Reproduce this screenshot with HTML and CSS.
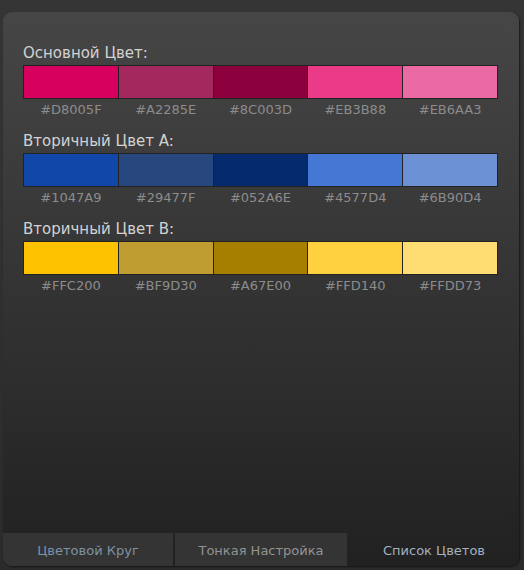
FILE: index.html
```html
<!DOCTYPE html>
<html lang="ru">
<head>
<meta charset="utf-8">
<title>Список Цветов</title>
<link rel="stylesheet" href="styles.css">
</head>
<body>
<div class="panel">
  <div class="content">
    <section class="group">
      <div class="group-title">Основной Цвет:</div>
      <div class="swatches">
        <div class="swatch c-d8005f"></div>
        <div class="swatch c-a2285e"></div>
        <div class="swatch c-8c003d"></div>
        <div class="swatch c-eb3b88"></div>
        <div class="swatch c-eb6aa3"></div>
      </div>
      <div class="codes">
        <span>#D8005F</span><span>#A2285E</span><span>#8C003D</span><span>#EB3B88</span><span>#EB6AA3</span>
      </div>
    </section>
    <section class="group">
      <div class="group-title">Вторичный Цвет A:</div>
      <div class="swatches">
        <div class="swatch c-1047a9"></div>
        <div class="swatch c-29477f"></div>
        <div class="swatch c-052a6e"></div>
        <div class="swatch c-4577d4"></div>
        <div class="swatch c-6b90d4"></div>
      </div>
      <div class="codes">
        <span>#1047A9</span><span>#29477F</span><span>#052A6E</span><span>#4577D4</span><span>#6B90D4</span>
      </div>
    </section>
    <section class="group">
      <div class="group-title">Вторичный Цвет B:</div>
      <div class="swatches">
        <div class="swatch c-ffc200"></div>
        <div class="swatch c-bf9d30"></div>
        <div class="swatch c-a67e00"></div>
        <div class="swatch c-ffd140"></div>
        <div class="swatch c-ffdd73"></div>
      </div>
      <div class="codes">
        <span>#FFC200</span><span>#BF9D30</span><span>#A67E00</span><span>#FFD140</span><span>#FFDD73</span>
      </div>
    </section>
  </div>
  <nav class="tabs">
    <div class="tab tab-wheel">Цветовой Круг</div>
    <div class="tab tab-fine">Тонкая Настройка</div>
    <div class="tab tab-active">Список Цветов</div>
  </nav>
</div>
</body>
</html>
```
FILE: styles.css
```css
html, body {
  margin: 0;
  height: 100%;
}
body {
  box-sizing: border-box;
  padding: 12px 5px 4px 3px;
  background: linear-gradient(#353535, #2b2b2b);
  font-family: "DejaVu Sans", Verdana, sans-serif;
}
.panel {
  height: 554px;
  display: flex;
  flex-direction: column;
  border-radius: 9px;
  overflow: hidden;
  background: linear-gradient(#464646, #212121);
  box-shadow: 1px 1px 2px rgba(0, 0, 0, 0.55);
}
.content {
  padding: 32px 21px 0 20px;
  display: flex;
  flex-direction: column;
  gap: 14px;
}
.group-title {
  font-size: 15px;
  line-height: 18px;
  color: #d2d2d2;
  margin-bottom: 3px;
}
.swatches {
  display: grid;
  grid-template-columns: repeat(5, 1fr);
  gap: 1px;
  padding: 1px;
  background: #222;
}
.swatch {
  height: 32px;
}
.codes {
  display: grid;
  grid-template-columns: repeat(5, 1fr);
  gap: 1px;
  padding: 0 1px;
  margin-top: 3px;
  font-size: 13px;
  line-height: 16px;
  color: #8c8c8c;
  text-align: center;
}
.c-d8005f { background: #D8005F; }
.c-a2285e { background: #A2285E; }
.c-8c003d { background: #8C003D; }
.c-eb3b88 { background: #EB3B88; }
.c-eb6aa3 { background: #EB6AA3; }
.c-1047a9 { background: #1047A9; }
.c-29477f { background: #29477F; }
.c-052a6e { background: #052A6E; }
.c-4577d4 { background: #4577D4; }
.c-6b90d4 { background: #6B90D4; }
.c-ffc200 { background: #FFC200; }
.c-bf9d30 { background: #BF9D30; }
.c-a67e00 { background: #A67E00; }
.c-ffd140 { background: #FFD140; }
.c-ffdd73 { background: #FFDD73; }

.tabs {
  margin-top: auto;
  display: grid;
  grid-template-columns: 170px 172px 1fr;
  gap: 2px;
  height: 33px;
}
.tab {
  display: flex;
  align-items: center;
  justify-content: center;
  font-size: 13px;
  padding-top: 1px;
}
.tab-wheel {
  background: #343434;
  color: #7f91a4;
}
.tab-fine {
  background: #343434;
  color: #939393;
}
.tab-active {
  color: #a3b1bf;
}
```
